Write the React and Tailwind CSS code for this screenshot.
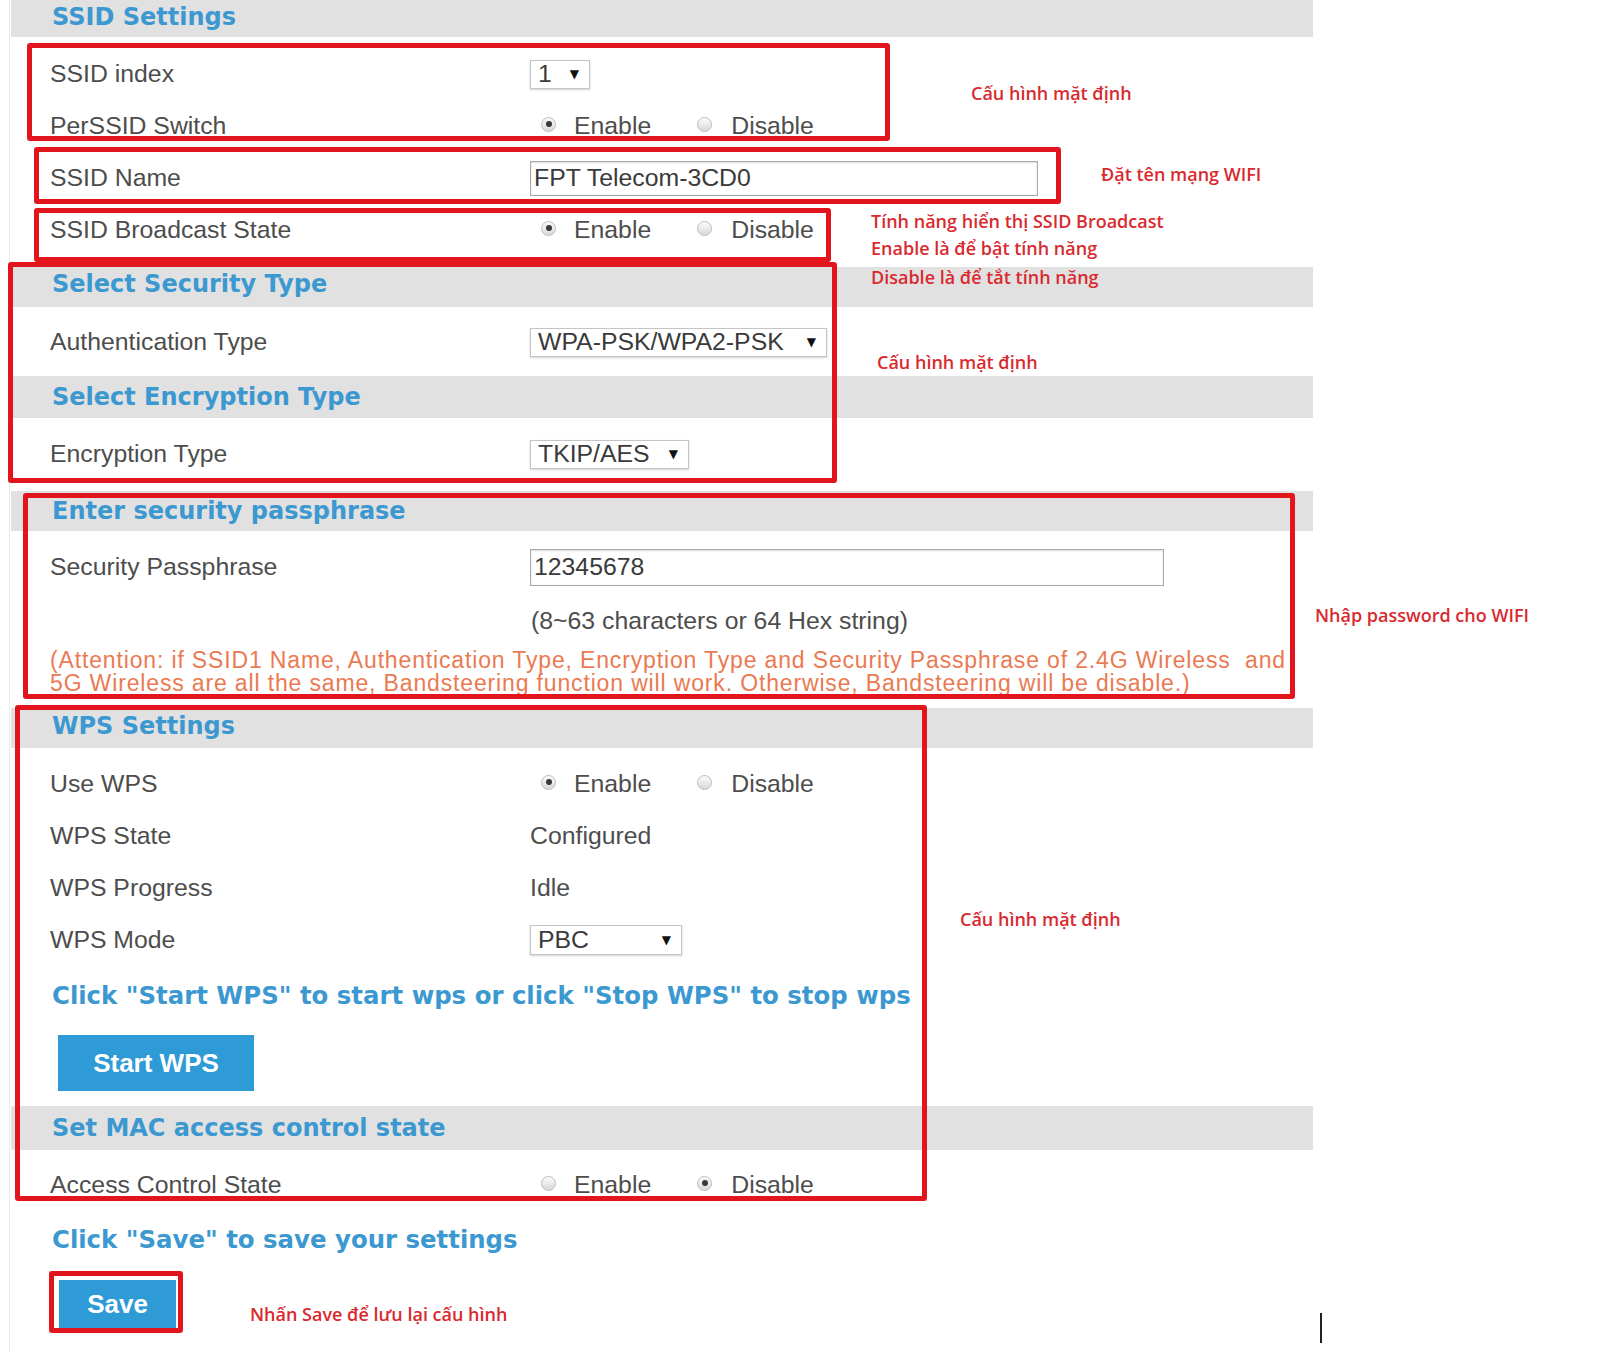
import React from 'react';

const Band = ({ title, className }) => (
  <div className={`flex items-center bg-[#e1e1e1] pl-[41px] font-['DejaVu_Sans',Verdana,sans-serif] text-[24px] font-bold text-[#3c98d0] ${className}`}>
    {title}
  </div>
);

const Row = ({ label, children, className = '' }) => (
  <div className={`flex h-[52px] items-center pl-[39px] ${className}`}>
    <div className="w-[480px] shrink-0">{label}</div>
    <div className="flex items-center">{children}</div>
  </div>
);

const Radio = ({ checked }) => (
  <span className="flex h-[15px] w-[15px] -translate-y-[2px] items-center justify-center rounded-full border border-[#bcbcbc] bg-gradient-to-b from-[#fbfbfb] to-[#d9d9d9]">
    {checked && <span className="h-[6px] w-[6px] rounded-full bg-[#3a3a3a]" />}
  </span>
);

const RadioPair = ({ enabled }) => (
  <div className="flex items-center pl-[11px]">
    <Radio checked={enabled} />
    <span className="ml-[18px]">Enable</span>
    <span className="ml-[46px]"><Radio checked={!enabled} /></span>
    <span className="ml-[19px]">Disable</span>
  </div>
);

const Select = ({ value, className }) => (
  <div className={`flex h-[29px] items-center justify-between border border-[#c4c4c4] bg-white pl-[7px] pr-[10px] leading-none text-[#3a3a3a] shadow-[0_1px_2px_rgba(0,0,0,0.18)] ${className}`}>
    <span>{value}</span>
    <span className="font-['DejaVu_Sans',sans-serif] text-[12px] text-[#111]">▼</span>
  </div>
);

const Note = ({ children, className }) => (
  <div className={`absolute whitespace-nowrap font-['Open_Sans',sans-serif] text-[18px] font-semibold leading-[22px] text-[#d92a2f] ${className}`}>
    {children}
  </div>
);

const Box = ({ className }) => (
  <div className={`pointer-events-none absolute rounded-[3px] border-[5px] border-[#e2141c] ${className}`} />
);

export default function App() {
  return (
    <div className="relative h-[1352px] w-full overflow-hidden bg-white font-['Liberation_Sans',Arial,sans-serif] text-[24.8px] text-[#4d4d4d]">
      <div className="ml-[9px] h-full w-[1304px] border-l border-[#e6edf2] pl-[1px]">
        <Band title="SSID Settings" className="h-[37px] pb-[3px]" />

        <div className="mt-[11px]">
          <Row label="SSID index">
            <Select value="1" className="w-[60px]" />
          </Row>
          <Row label="PerSSID Switch">
            <RadioPair enabled />
          </Row>
          <Row label="SSID Name">
            <div className="flex h-[35px] w-[508px] items-center border border-[#a8a8a8] bg-white pl-[3px] text-[#3a3a3a] shadow-[inset_0_1px_2px_rgba(0,0,0,0.15)]">
              FPT Telecom-3CD0
            </div>
          </Row>
          <Row label="SSID Broadcast State">
            <RadioPair enabled />
          </Row>
        </div>

        <Band title="Select Security Type" className="mt-[11px] h-[40px] pb-[6px]" />
        <Row label="Authentication Type" className="mt-[9px]">
          <Select value="WPA-PSK/WPA2-PSK" className="w-[297px]" />
        </Row>

        <Band title="Select Encryption Type" className="mt-[8px] h-[42px]" />
        <Row label="Encryption Type" className="mt-[10px]">
          <Select value="TKIP/AES" className="w-[159px]" />
        </Row>

        <Band title="Enter security passphrase" className="mt-[11px] h-[40px] pl-[38px]" />
        <Row label="Security Passphrase" className="mt-[10px]">
          <div className="flex h-[37px] w-[634px] items-center border border-[#a8a8a8] bg-white pl-[3px] text-[#3a3a3a] shadow-[inset_0_1px_2px_rgba(0,0,0,0.15)]">
            12345678
          </div>
        </Row>
        <div className="flex h-[56px] items-center pl-[520px]">(8~63 characters or 64 Hex string)</div>
        <div className="whitespace-pre pl-[39px] text-[23px] leading-[23px] tracking-[0.85px] text-[#ea7a52]">
          {'(Attention: if SSID1 Name, Authentication Type, Encryption Type and Security Passphrase of 2.4G Wireless  and\n5G Wireless are all the same, Bandsteering function will work. Otherwise, Bandsteering will be disable.)'}
        </div>

        <Band title="WPS Settings" className="mt-[13px] h-[40px] pl-[39px] pb-[4px]" />
        <Row label="Use WPS" className="mt-[10px]">
          <RadioPair enabled />
        </Row>
        <Row label="WPS State">Configured</Row>
        <Row label="WPS Progress">Idle</Row>
        <Row label="WPS Mode" className="h-[50px]">
          <Select value="PBC" className="h-[30px] w-[152px]" />
        </Row>
        <div className="mt-[5px] flex h-[50px] items-center pl-[41px] font-['DejaVu_Sans',Verdana,sans-serif] text-[24.4px] font-bold text-[#3c98d0]">
          Click &quot;Start WPS&quot; to start wps or click &quot;Stop WPS&quot; to stop wps
        </div>
        <div className="mt-[14px] pl-[47px]">
          <button className="flex h-[56px] w-[196px] items-center justify-center bg-[#2e9ad6] text-[26px] font-bold text-white">
            Start WPS
          </button>
        </div>

        <Band title="Set MAC access control state" className="mt-[15px] h-[44px]" />
        <Row label="Access Control State" className="mt-[9px]">
          <RadioPair enabled={false} />
        </Row>
        <div className="mt-[4px] flex h-[50px] items-center pl-[41px] font-['DejaVu_Sans',Verdana,sans-serif] text-[24.4px] font-bold text-[#3c98d0]">
          Click &quot;Save&quot; to save your settings
        </div>
        <div className="mt-[15px] pl-[48px]">
          <button className="flex h-[48px] w-[117px] items-center justify-center bg-[#2e9ad6] text-[26px] font-bold text-white">
            Save
          </button>
        </div>
      </div>

      {/* red annotation frames drawn over the form */}
      <Box className="left-[27px] top-[43px] h-[98px] w-[863px]" />
      <Box className="left-[34px] top-[147px] h-[57px] w-[1027px]" />
      <Box className="left-[34px] top-[208px] h-[54px] w-[797px]" />
      <Box className="left-[8px] top-[262px] h-[221px] w-[829px]" />
      <Box className="left-[23px] top-[493px] h-[206px] w-[1272px]" />
      <Box className="left-[15px] top-[705px] h-[496px] w-[912px]" />
      <Box className="left-[49px] top-[1271px] h-[62px] w-[134px]" />

      <Note className="left-[971px] top-[82px]">Cấu hình mặt định</Note>
      <Note className="left-[1101px] top-[163px]">Đặt tên mạng WIFI</Note>
      <Note className="left-[871px] top-[210px]">Tính năng hiển thị SSID Broadcast</Note>
      <Note className="left-[871px] top-[237px]">Enable là để bật tính năng</Note>
      <Note className="left-[871px] top-[266px]">Disable là để tắt tính năng</Note>
      <Note className="left-[877px] top-[351px]">Cấu hình mặt định</Note>
      <Note className="left-[1315px] top-[604px]">Nhập password cho WIFI</Note>
      <Note className="left-[960px] top-[908px]">Cấu hình mặt định</Note>
      <Note className="left-[250px] top-[1303px]">Nhấn Save để lưu lại cấu hình</Note>

      <div className="absolute left-[1320px] top-[1313px] h-[30px] w-[2px] bg-[#222]" />
    </div>
  );
}
